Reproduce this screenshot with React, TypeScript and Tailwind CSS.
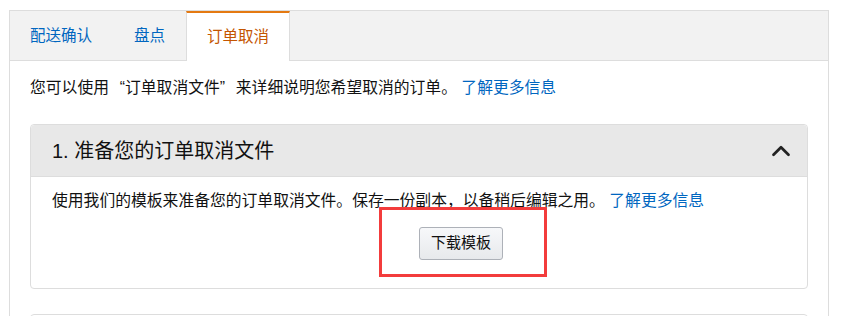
import { ChevronUp } from "lucide-react";

const tabs = ["配送确认", "盘点", "订单取消"];

function Quote({ open }: { open: boolean }) {
  return (
    <span className={`inline-block w-[16px] ${open ? "text-right" : "text-left"}`}>
      {open ? "“" : "”"}
    </span>
  );
}

export default function App() {
  return (
    <div
      className="h-[316px] w-[852px] overflow-hidden bg-white pl-[9px] pt-[10px] text-[#111]"
      style={{ fontFamily: '"Liberation Sans", "Noto Sans CJK SC", sans-serif' }}
    >
      <div className="h-[400px] w-[820px] border border-[#ddd]">
        {/* Tabs */}
        <div className="flex h-[50px] border-b border-[#ddd] bg-[#f2f2f2]">
          {tabs.map((tab, i) =>
            i === 2 ? (
              <div
                key={tab}
                className="-mb-px flex h-[50px] items-center border-x border-t-2 border-x-[#ddd] border-t-[#e47911] bg-white px-[20px] text-[15.5px] text-[#c45500]"
              >
                {tab}
              </div>
            ) : (
              <div
                key={tab}
                className={`flex items-center px-[21px] text-[15.5px] text-[#0066c0] ${i === 0 ? "pl-[20px]" : ""}`}
              >
                {tab}
              </div>
            )
          )}
        </div>

        {/* Content */}
        <div className="px-[20px] pt-[16px]">
          <p className="text-[15.8px] leading-[22px]">
            您可以使用<Quote open />订单取消文件<Quote open={false} />来详细说明您希望取消的订单。{" "}
            <span className="text-[#0066c0]">了解更多信息</span>
          </p>

          <div className="mt-[25px] rounded-[4px] border border-[#ddd]">
            <div className="flex h-[52px] items-center justify-between rounded-t-[4px] border-b border-[#ddd] bg-[#e8e8e8] pl-[21px] pr-[11px]">
              <h2 className="text-[20px] leading-none text-[#111]">1. 准备您的订单取消文件</h2>
              <ChevronUp size={30} strokeWidth={2.2} className="text-[#222]" />
            </div>
            <div className="relative px-[21px] pb-[28px] pt-[13px]">
              <p className="text-[15.8px] leading-[22px]">
                使用我们的模板来准备您的订单取消文件。保存一份副本，以备稍后编辑之用。{" "}
                <span className="text-[#0066c0]">了解更多信息</span>
              </p>
              <div className="ml-[50%] mt-[15px]">
                <button className="h-[33px] w-[84px] rounded-[3px] border border-[#adb1b8] bg-gradient-to-b from-[#f7f8fa] to-[#e7e9ec] text-[15px] text-[#111]">
                  下载模板
                </button>
              </div>
              <div className="absolute left-[348px] top-[30px] h-[70px] w-[168px] border-[3px] border-[#f33c3c]" />
            </div>
          </div>

          <div className="mt-[25px] h-[60px] rounded-t-[4px] border border-[#ddd]" />
        </div>
      </div>
    </div>
  );
}
